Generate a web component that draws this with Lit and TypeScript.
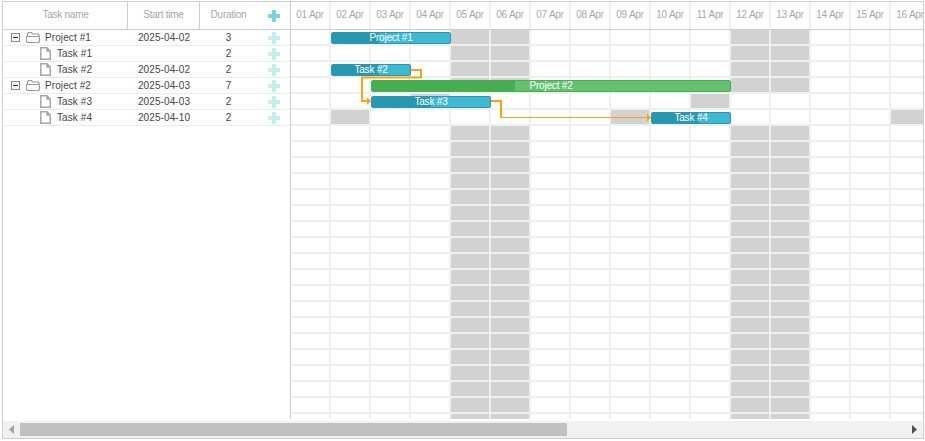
import { LitElement, html, css, svg } from "lit";
import { customElement } from "lit/decorators.js";

const days = Array.from({ length: 16 }, (_, i) => `${String(i + 1).padStart(2, "0")} Apr`);
const ROWS = 25;
const grayFor = (row: number, col: number) => {
  if (row === 4) return col === 3 || col === 10;
  if (row === 5) return col === 1 || col === 8 || col === 15;
  return col === 4 || col === 5 || col === 11 || col === 12;
};

const tasks = [
  { name: "Project #1", start: "2025-04-02", dur: 3, project: true },
  { name: "Task #1", start: "", dur: 2, project: false },
  { name: "Task #2", start: "2025-04-02", dur: 2, project: false },
  { name: "Project #2", start: "2025-04-03", dur: 7, project: true },
  { name: "Task #3", start: "2025-04-03", dur: 2, project: false },
  { name: "Task #4", start: "2025-04-10", dur: 2, project: false },
];

const bars = [
  { name: "Project #1", row: 0, col: 1, span: 3, progress: 40, green: false },
  { name: "Task #2", row: 2, col: 1, span: 2, progress: 60, green: false },
  { name: "Project #2", row: 3, col: 2, span: 9, progress: 40, green: true },
  { name: "Task #3", row: 4, col: 2, span: 3, progress: 50, green: false },
  { name: "Task #4", row: 5, col: 9, span: 2, progress: 60, green: false },
];

const plus = html`<svg class="plus" width="12" height="12" viewBox="0 0 12 12"><path d="M4 0h4v4h4v4H8v4H4V8H0V4h4z" fill="currentColor"/></svg>`;
const minusBox = html`<svg width="9" height="9" viewBox="0 0 9 9"><rect x=".5" y=".5" width="8" height="8" fill="#f4f4f4" stroke="#8c8c8c"/><path d="M2 4.5h5" stroke="#333" fill="none"/></svg>`;
const folder = html`<svg width="14" height="11" viewBox="0 0 14 11" fill="none" stroke="#999" stroke-width="1.200"><path d="M1.5 10.5h11l1-1V4.500h-13v5zM1.500 4.500V2l1-1.500h3l1 1.500h5.500l1 1v1.500"/></svg>`;
const file = html`<svg width="11" height="13" viewBox="0 0 11 13" fill="none" stroke="#a6a6a6" stroke-width="1.500"><path d="M.8.800h6.200l3.200 3.200v8.200H.8zM7 .8v3.200h3.200"/></svg>`;

@customElement("app-root")
export class AppRoot extends LitElement {
  static styles = css`
    :host {
      display: block;
      padding: 1px 0 0 2px;
      font-family: "Liberation Sans", Arial, sans-serif;
      background: #fff;
    }
    .gantt {
      box-sizing: border-box;
      width: 922px;
      height: 438px;
      border: 1px solid #cecece;
      display: flex;
      flex-direction: column;
      overflow: hidden;
    }
    .main {
      flex: 1;
      display: flex;
      min-height: 0;
    }
    .grid {
      box-sizing: border-box;
      width: 288px;
      flex: none;
      border-right: 1px solid #cecece;
    }
    .ghead,
    .row {
      display: grid;
      grid-template-columns: 125px 72px 57px 33px;
      align-items: center;
    }
    .ghead {
      box-sizing: border-box;
      height: 28px;
      border-bottom: 1px solid #cecece;
      font-size: 10px;
      letter-spacing: -0.25px;
      color: #a6a6a6;
      text-align: center;
    }
    .ghead > div {
      box-sizing: border-box;
      height: 27px;
      line-height: 26px;
    }
    .ghead > .sep {
      border-right: 1px solid #cecece;
    }
    .ghead > .first {
      padding-left: 1px;
    }
    .ghead .plus {
      color: #7dd3e5;
      display: block;
      margin: 8px auto 0;
    }
    .row {
      box-sizing: border-box;
      height: 16px;
      border-bottom: 1px solid #ebebeb;
      font-size: 10px;
      letter-spacing: 0.1px;
      color: #454545;
      text-align: center;
    }
    .row .plus {
      color: #c4ecf4;
      display: block;
      margin: 0 auto;
    }
    .tree {
      display: flex;
      align-items: center;
      text-align: left;
    }
    .tree.project {
      padding-left: 8px;
      gap: 6px;
    }
    .tree.project svg + svg {
      margin-right: -1px;
    }
    .tree.leaf {
      padding-left: 37px;
      gap: 6px;
    }
    .tree svg {
      display: block;
      flex: none;
    }
    .timeline {
      flex: 1;
      min-width: 0;
      overflow: hidden;
    }
    .thead,
    .trow {
      display: grid;
      grid-template-columns: repeat(16, 40px);
      width: 640px;
    }
    .thead {
      box-sizing: border-box;
      height: 28px;
      border-bottom: 1px solid #cecece;
    }
    .thead > div {
      box-sizing: border-box;
      border-right: 2px solid #efefef;
      font-size: 10px;
      letter-spacing: -0.25px;
      line-height: 26px;
      color: #a6a6a6;
      text-align: center;
      white-space: nowrap;
    }
    .tbody {
      position: relative;
      width: 640px;
    }
    .trow {
      height: 16px;
    }
    .cell {
      box-sizing: border-box;
      border-right: 2px solid #efefef;
      border-bottom: 2px solid #efefef;
    }
    .cell.gray {
      background: #d2d2d2;
    }
    .bar {
      position: absolute;
      box-sizing: border-box;
      height: 12px;
      margin-top: 2px;
      border: 1px solid #2898b0;
      border-radius: 2px;
      background: #3db9d3;
      overflow: hidden;
      color: #fff;
      font-size: 10px;
      letter-spacing: -0.2px;
      line-height: 10px;
      text-align: center;
    }
    .bar.green {
      background: #65c16f;
      border-color: #46ad51;
    }
    .fill {
      position: absolute;
      left: 0;
      top: 0;
      bottom: 0;
      background: #2898b0;
    }
    .green .fill {
      background: #46ad51;
    }
    .label {
      position: relative;
    }
    .links {
      position: absolute;
      left: 0;
      top: 0;
      pointer-events: none;
    }
    .scroll {
      flex: none;
      height: 17px;
      margin-top: 2px;
      background: #f1f1f1;
      display: flex;
      align-items: center;
      justify-content: space-between;
      padding: 0 6px;
      position: relative;
    }
    .scroll svg {
      display: block;
    }
    .thumb {
      position: absolute;
      left: 17px;
      top: 2px;
      width: 547px;
      height: 13px;
      background: #c1c1c1;
    }
  `;

  render() {
    return html`<div class="gantt">
      <div class="main">
        <div class="grid">
          <div class="ghead">
            <div class="sep first">Task name</div>
            <div class="sep">Start time</div>
            <div>Duration</div>
            <div>${plus}</div>
          </div>
          ${tasks.map(
            (t) => html`<div class="row">
              <div class="tree ${t.project ? "project" : "leaf"}">
                ${t.project ? html`${minusBox}${folder}` : file}<span>${t.name}</span>
              </div>
              <div>${t.start}</div>
              <div>${t.dur}</div>
              <div>${plus}</div>
            </div>`
          )}
        </div>
        <div class="timeline">
          <div class="thead">${days.map((d) => html`<div>${d}</div>`)}</div>
          <div class="tbody">
            ${Array.from(
              { length: ROWS },
              (_, r) => html`<div class="trow">
                ${days.map((_d, c) => html`<div class="cell ${grayFor(r, c) ? "gray" : ""}"></div>`)}
              </div>`
            )}
            ${bars.map(
              (b) => html`<div
                class="bar ${b.green ? "green" : ""}"
                style="left:${b.col * 40}px;top:${b.row * 16}px;width:${b.span * 40}px"
              >
                <div class="fill" style="width:${b.progress}%"></div>
                <div class="label">${b.name}</div>
              </div>`
            )}
            <svg class="links" width="640" height="120" viewBox="0 0 640 120">
              ${svg`<g fill="none" stroke="#ffa011" stroke-width="2">
                <path d="M120 40H130V47.500H71V71H76"/>
                <path d="M200 71H210V87"/>
              </g>
              <path d="M209 87.500H356" fill="none" stroke="#ffa011" stroke-width="1.200"/>
              <path d="M76 67l4 4-4 4zM356 83.500l4 4-4 4z" fill="#ffa011"/>`}
            </svg>
          </div>
        </div>
      </div>
      <div class="scroll">
        <svg width="5" height="9" viewBox="0 0 5 9"><path d="M5 0v9L0 4.500z" fill="#a3a3a3"/></svg>
        <div class="thumb"></div>
        <svg width="5" height="9" viewBox="0 0 5 9"><path d="M0 0v9l5-4.500z" fill="#505050"/></svg>
      </div>
    </div>`;
  }
}
